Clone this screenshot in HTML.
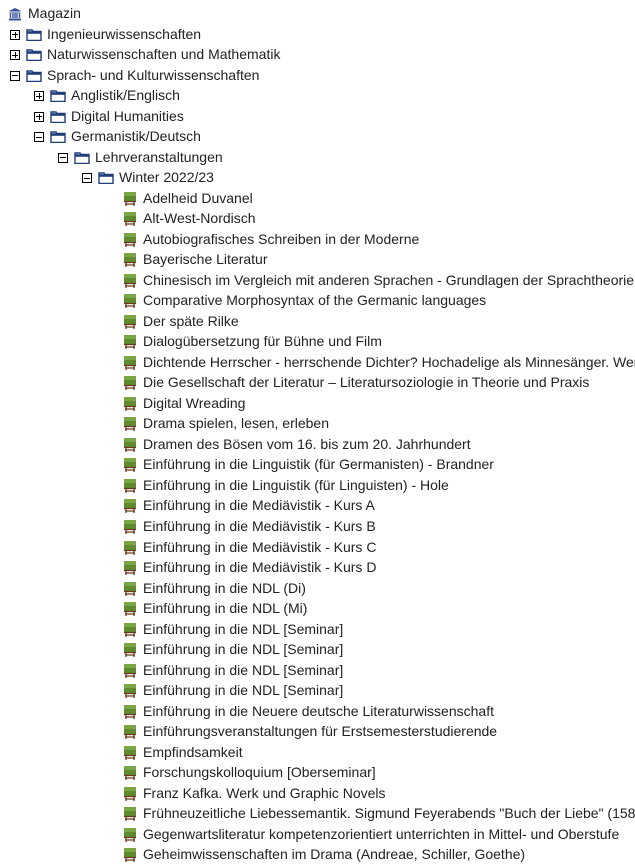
<!DOCTYPE html>
<html><head><meta charset="utf-8"><style>
body{margin:0;background:#fff;width:635px;height:867px;overflow:hidden;font-family:"Liberation Sans",sans-serif;font-size:14px;color:#222}
#t{position:relative;width:635px;height:867px;overflow:hidden}
.r{position:absolute;height:20px;line-height:20px;white-space:nowrap;overflow:hidden}
.b{position:absolute;width:8px;height:8px;border:1px solid #000;top:6px}
.b:before{content:"";position:absolute;left:1px;top:3.5px;width:6px;height:1px;background:#000}
.b.p:after{content:"";position:absolute;left:3.5px;top:1px;width:1px;height:6px;background:#000}
.f{position:absolute;top:5px;width:16px;height:12px}
.c{position:absolute;top:4px;width:12px;height:14px}
</style></head><body>
<svg width="0" height="0" style="position:absolute"><defs>
<symbol id="fold" viewBox="0 0 16 12"><path d="M1 1h5l1 1.5h8v9H1z" fill="#fff" stroke="#1f3e7a" stroke-width="1.4"/><path d="M1 3.5h14" stroke="#1f3e7a" stroke-width="2.6"/></symbol>
<symbol id="ch" viewBox="0 0 12 14"><rect x="0" y="0" width="12" height="9" fill="#5f8a2e"/><rect x="0" y="0" width="12" height="4" fill="#7aa646"/><path d="M0 9.5h12M2 10v4M10 10v4M1 12h10" stroke="#6b3a1e" stroke-width="1.3"/></symbol>
</defs></svg>
<div id="t"></div>
<script>
var rows=[[0,"Magazin","m"],[0,"Ingenieurwissenschaften","p"],[0,"Naturwissenschaften und Mathematik","p"],[0,"Sprach- und Kulturwissenschaften","o"],[1,"Anglistik/Englisch","p"],[1,"Digital Humanities","p"],[1,"Germanistik/Deutsch","o"],[2,"Lehrveranstaltungen","o"],[3,"Winter 2022/23","o"]];
["Adelheid Duvanel","Alt-West-Nordisch","Autobiografisches Schreiben in der Moderne","Bayerische Literatur","Chinesisch im Vergleich mit anderen Sprachen - Grundlagen der Sprachtheorie, Grammatik","Comparative Morphosyntax of the Germanic languages","Der späte Rilke","Dialogübersetzung für Bühne und Film","Dichtende Herrscher - herrschende Dichter? Hochadelige als Minnesänger. Werk - Kontext","Die Gesellschaft der Literatur – Literatursoziologie in Theorie und Praxis","Digital Wreading","Drama spielen, lesen, erleben","Dramen des Bösen vom 16. bis zum 20. Jahrhundert","Einführung in die Linguistik (für Germanisten) - Brandner","Einführung in die Linguistik (für Linguisten) - Hole","Einführung in die Mediävistik - Kurs A","Einführung in die Mediävistik - Kurs B","Einführung in die Mediävistik - Kurs C","Einführung in die Mediävistik - Kurs D","Einführung in die NDL (Di)","Einführung in die NDL (Mi)","Einführung in die NDL [Seminar]","Einführung in die NDL [Seminar]","Einführung in die NDL [Seminar]","Einführung in die NDL [Seminar]","Einführung in die Neuere deutsche Literaturwissenschaft","Einführungsveranstaltungen für Erstsemesterstudierende","Empfindsamkeit","Forschungskolloquium [Oberseminar]","Franz Kafka. Werk und Graphic Novels","Frühneuzeitliche Liebessemantik. Sigmund Feyerabends \"Buch der Liebe\" (1587)","Gegenwartsliteratur kompetenzorientiert unterrichten in Mittel- und Oberstufe","Geheimwissenschaften im Drama (Andreae, Schiller, Goethe)"].forEach(function(s){rows.push([4,s,"c"])});
var h="";
rows.forEach(function(r,i){
 var top=3+i*20.52, x=r[0]*24, inner="";
 if(r[2]=="m"){inner='<svg style="position:absolute;left:8px;top:4px" width="14" height="14" viewBox="0 0 14 14"><path d="M7 1L1 4h12z" fill="#34509a"/><rect x="1.5" y="4.5" width="11" height="1" fill="#34509a"/><path d="M2.5 6v5M5 6v5M7 6v5M9 6v5M11.5 6v5" stroke="#34509a" stroke-width="1.4"/><rect x="1" y="11.5" width="12" height="2" fill="#34509a"/></svg><span style="position:absolute;left:28px">'+r[1]+'</span>';}
 else if(r[2]=="c"){inner='<svg class="c" style="left:124px"><use href="#ch"/></svg><span style="position:absolute;left:143px">'+r[1]+'</span>';x=0;}
 else{inner='<div class="b '+(r[2]=="p"?"p":"")+'" style="left:'+(10+x)+'px"></div><svg class="f" style="left:'+(26+x)+'px"><use href="#fold"/></svg><span style="position:absolute;left:'+(47+x)+'px">'+r[1]+'</span>';x=0;}
 h+='<div class="r" style="top:'+top+'px;left:0;width:635px">'+inner+'</div>';
});
document.getElementById("t").innerHTML=h;
</script>
</body></html>
